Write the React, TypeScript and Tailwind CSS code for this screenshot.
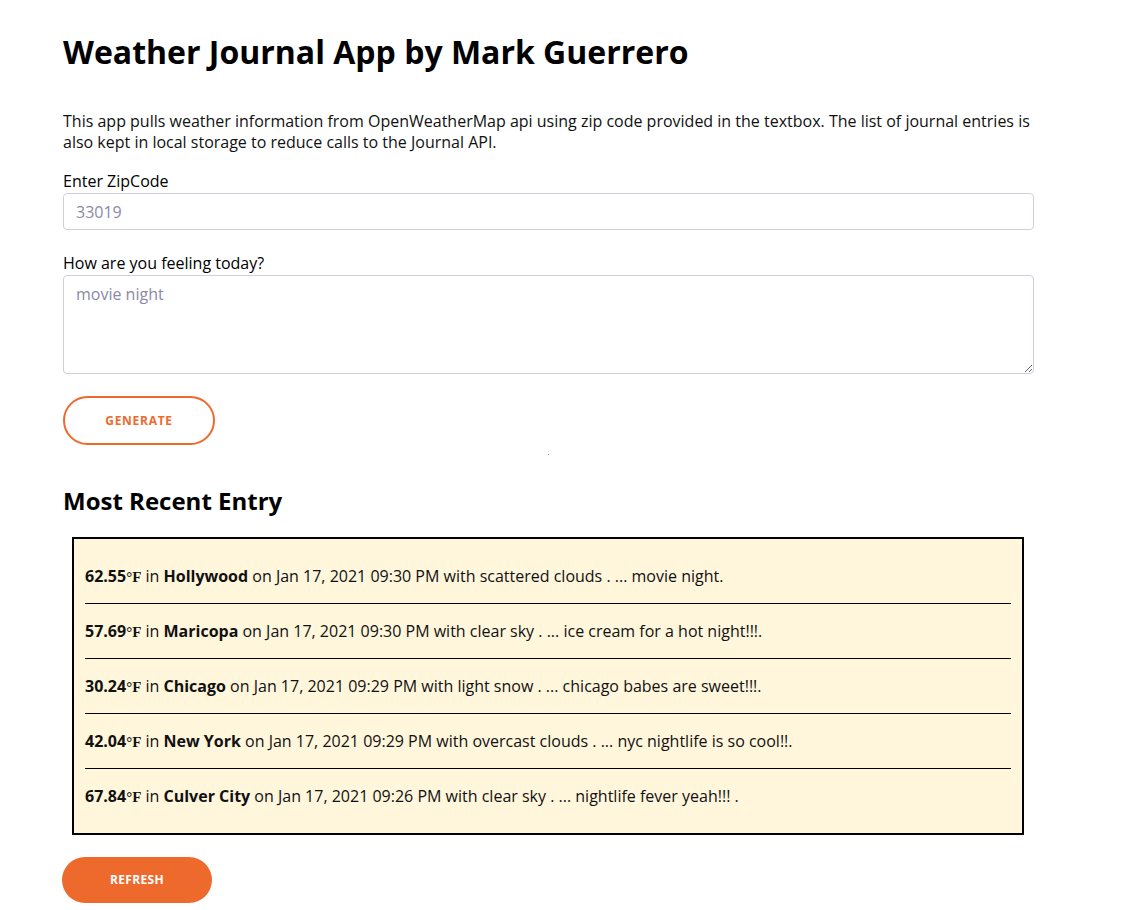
import React from "react";

const entries = [
  { temp: "62.55", city: "Hollywood", date: "Jan 17, 2021 09:30 PM", sky: "scattered clouds", feel: "movie night" },
  { temp: "57.69", city: "Maricopa", date: "Jan 17, 2021 09:30 PM", sky: "clear sky", feel: "ice cream for a hot night!!!" },
  { temp: "30.24", city: "Chicago", date: "Jan 17, 2021 09:29 PM", sky: "light snow", feel: "chicago babes are sweet!!!" },
  { temp: "42.04", city: "New York", date: "Jan 17, 2021 09:29 PM", sky: "overcast clouds", feel: "nyc nightlife is so cool!!" },
  { temp: "67.84", city: "Culver City", date: "Jan 17, 2021 09:26 PM", sky: "clear sky", feel: "nightlife fever yeah!!! " },
];

export default function App() {
  return (
    <div className="min-h-screen bg-white text-black font-['Open_Sans',sans-serif]">
      <main className="w-[971px] ml-[63px] pt-[26px] pb-2">
        {/* TITLE */}
        <h1 className="text-[32px] leading-[52px] font-bold">Weather Journal App by Mark Guerrero</h1>

        {/* INTRO */}
        <p className="mt-[33px] text-base leading-[21px] text-[#111]">
          This app pulls weather information from OpenWeatherMap api using zip code provided in the textbox. The list of journal entries is
          also kept in local storage to reduce calls to the Journal API.
        </p>

        {/* FORM */}
        <label className="block mt-[17px] text-base leading-[22px]">Enter ZipCode</label>
        <input
          placeholder="33019"
          className="block w-[971px] h-[37px] mt-px px-3 border border-[#cfcfdd] rounded-[4px] text-base placeholder:text-[#8a8aa6] outline-none"
        />

        <label className="block mt-[22px] text-base leading-[22px]">How are you feeling today?</label>
        <textarea
          placeholder="movie night"
          className="block w-[971px] h-[99px] mt-px px-3 py-[6px] border border-[#cfcfdd] rounded-[4px] text-base placeholder:text-[#8a8aa6] outline-none"
        />

        <button className="mt-[22px] w-[152px] h-[49px] rounded-full border-2 border-[#ee6a2c] text-[#ee6a2c] text-xs font-bold tracking-[0.06em]">
          GENERATE
        </button>

        <div className="flex justify-center w-[971px] h-[20px]">
          <span className="mt-[9px] w-px h-px bg-[#999]" />
        </div>

        {/* MOST RECENT */}
        <h2 className="mt-[20px] text-2xl leading-[32px] font-bold">Most Recent Entry</h2>

        <section className="ml-[9px] mr-[10px] mt-[20px] border-2 border-black bg-[#fff6dc] px-[11px] py-[10px]">
          {entries.map((e, i) => (
            <div key={e.city}>
              {i > 0 && <hr className="border-t border-black" />}
              <p className="py-[15px] text-base leading-6 text-[#111]">
                <b>{e.temp}</b>
                <b className="font-['Liberation_Serif',serif] text-[15px] leading-none">°F</b> in <b>{e.city}</b> on {e.date} with {e.sky} . ... {e.feel}.
              </p>
            </div>
          ))}
        </section>

        <button className="mt-[22px] -ml-px w-[150px] h-[46px] rounded-full bg-[#ee6a2c] text-white text-xs font-bold tracking-[0.03em]">
          REFRESH
        </button>
      </main>
    </div>
  );
}
